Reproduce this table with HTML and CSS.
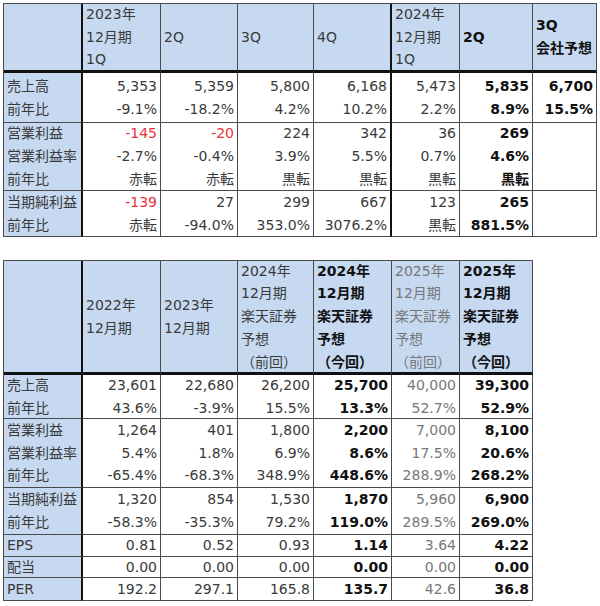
FILE: index.html
```html
<!DOCTYPE html>
<html lang="ja">
<head>
<meta charset="utf-8">
<title>業績推移</title>
<link rel="stylesheet" href="styles.css">
</head>
<body>
<div class="page">
  <div class="sheet sheet-q">
    <div class="c hd lab thick-r thick-b"></div>
    <div class="c hd thick-b"><div>2023年</div><div>12月期</div><div>1Q</div></div>
    <div class="c hd thick-b"><div>2Q</div></div>
    <div class="c hd thick-b"><div>3Q</div></div>
    <div class="c hd thick-b thick-r"><div>4Q</div></div>
    <div class="c hd thick-b"><div>2024年</div><div>12月期</div><div>1Q</div></div>
    <div class="c hd thick-b b"><div>2Q</div></div>
    <div class="c hd thick-b b"><div>3Q</div><div>会社予想</div></div>

    <div class="c lab thick-r"><div>売上高</div><div>前年比</div></div>
    <div class="c num"><div>5,353</div><div>-9.1%</div></div>
    <div class="c num"><div>5,359</div><div>-18.2%</div></div>
    <div class="c num"><div>5,800</div><div>4.2%</div></div>
    <div class="c num thick-r"><div>6,168</div><div>10.2%</div></div>
    <div class="c num"><div>5,473</div><div>2.2%</div></div>
    <div class="c num b"><div>5,835</div><div>8.9%</div></div>
    <div class="c num b"><div>6,700</div><div>15.5%</div></div>

    <div class="c lab thick-r"><div>営業利益</div><div>営業利益率</div><div>前年比</div></div>
    <div class="c num"><div class="neg">-145</div><div>-2.7%</div><div>赤転</div></div>
    <div class="c num"><div class="neg">-20</div><div>-0.4%</div><div>赤転</div></div>
    <div class="c num"><div>224</div><div>3.9%</div><div>黒転</div></div>
    <div class="c num thick-r"><div>342</div><div>5.5%</div><div>黒転</div></div>
    <div class="c num"><div>36</div><div>0.7%</div><div>黒転</div></div>
    <div class="c num b"><div>269</div><div>4.6%</div><div>黒転</div></div>
    <div class="c num b"></div>

    <div class="c lab thick-r"><div>当期純利益</div><div>前年比</div></div>
    <div class="c num"><div class="neg">-139</div><div>赤転</div></div>
    <div class="c num"><div>27</div><div>-94.0%</div></div>
    <div class="c num"><div>299</div><div>353.0%</div></div>
    <div class="c num thick-r"><div>667</div><div>3076.2%</div></div>
    <div class="c num"><div>123</div><div>黒転</div></div>
    <div class="c num b"><div>265</div><div>881.5%</div></div>
    <div class="c num b"></div>
  </div>

  <div class="sheet sheet-y">
    <div class="c hd lab thick-r thick-b"></div>
    <div class="c hd thick-b"><div>2022年</div><div>12月期</div></div>
    <div class="c hd thick-b"><div>2023年</div><div>12月期</div></div>
    <div class="c hd thick-b"><div>2024年</div><div>12月期</div><div>楽天証券</div><div>予想</div><div>（前回）</div></div>
    <div class="c hd thick-b b"><div>2024年</div><div>12月期</div><div>楽天証券</div><div>予想</div><div>（今回）</div></div>
    <div class="c hd thick-b light"><div>2025年</div><div>12月期</div><div>楽天証券</div><div>予想</div><div>（前回）</div></div>
    <div class="c hd thick-b b"><div>2025年</div><div>12月期</div><div>楽天証券</div><div>予想</div><div>（今回）</div></div>

    <div class="c lab thick-r"><div>売上高</div><div>前年比</div></div>
    <div class="c num"><div>23,601</div><div>43.6%</div></div>
    <div class="c num"><div>22,680</div><div>-3.9%</div></div>
    <div class="c num"><div>26,200</div><div>15.5%</div></div>
    <div class="c num b"><div>25,700</div><div>13.3%</div></div>
    <div class="c num light"><div>40,000</div><div>52.7%</div></div>
    <div class="c num b"><div>39,300</div><div>52.9%</div></div>

    <div class="c lab thick-r"><div>営業利益</div><div>営業利益率</div><div>前年比</div></div>
    <div class="c num"><div>1,264</div><div>5.4%</div><div>-65.4%</div></div>
    <div class="c num"><div>401</div><div>1.8%</div><div>-68.3%</div></div>
    <div class="c num"><div>1,800</div><div>6.9%</div><div>348.9%</div></div>
    <div class="c num b"><div>2,200</div><div>8.6%</div><div>448.6%</div></div>
    <div class="c num light"><div>7,000</div><div>17.5%</div><div>288.9%</div></div>
    <div class="c num b"><div>8,100</div><div>20.6%</div><div>268.2%</div></div>

    <div class="c lab thick-r"><div>当期純利益</div><div>前年比</div></div>
    <div class="c num"><div>1,320</div><div>-58.3%</div></div>
    <div class="c num"><div>854</div><div>-35.3%</div></div>
    <div class="c num"><div>1,530</div><div>79.2%</div></div>
    <div class="c num b"><div>1,870</div><div>119.0%</div></div>
    <div class="c num light"><div>5,960</div><div>289.5%</div></div>
    <div class="c num b"><div>6,900</div><div>269.0%</div></div>

    <div class="c lab thick-r"><div>EPS</div></div>
    <div class="c num"><div>0.81</div></div>
    <div class="c num"><div>0.52</div></div>
    <div class="c num"><div>0.93</div></div>
    <div class="c num b"><div>1.14</div></div>
    <div class="c num light"><div>3.64</div></div>
    <div class="c num b"><div>4.22</div></div>

    <div class="c lab thick-r"><div>配当</div></div>
    <div class="c num"><div>0.00</div></div>
    <div class="c num"><div>0.00</div></div>
    <div class="c num"><div>0.00</div></div>
    <div class="c num b"><div>0.00</div></div>
    <div class="c num light"><div>0.00</div></div>
    <div class="c num b"><div>0.00</div></div>

    <div class="c lab thick-r"><div>PER</div></div>
    <div class="c num"><div>192.2</div></div>
    <div class="c num"><div>297.1</div></div>
    <div class="c num"><div>165.8</div></div>
    <div class="c num b"><div>135.7</div></div>
    <div class="c num light"><div>42.6</div></div>
    <div class="c num b"><div>36.8</div></div>
  </div>
</div>
</body>
</html>
```

FILE: styles.css
```css
html, body {
  margin: 0;
  padding: 0;
  background: #ffffff;
}

body {
  font-family: "DejaVu Sans", "Noto Sans CJK JP", sans-serif;
  font-size: 14px;
  color: #3a3a3a;
}

.page {
  padding: 3px;
  display: flex;
  flex-direction: column;
  align-items: flex-start;
  gap: 23px;
}

.sheet {
  display: grid;
  border-top: 1px solid #4a4a4a;
  border-left: 1px solid #4a4a4a;
}

.sheet-q {
  grid-template-columns: 79px 78px 77px 76px 78px 68px 73px 64px;
  grid-template-rows: 69px 50px 68px 46px;
}

.sheet-y {
  grid-template-columns: 79px 78px 77px 76px 78px 68px 73px;
  grid-template-rows: 114px 44px 69px 47px 22px 21px 23px;
}

.c {
  box-sizing: border-box;
  border-right: 1px solid #4a4a4a;
  border-bottom: 1px solid #4a4a4a;
  display: flex;
  flex-direction: column;
  justify-content: center;
  line-height: 22.7px;
  white-space: nowrap;
  overflow: visible;
  min-height: 0;
}

.hd {
  background: #c6d9f1;
  align-items: flex-start;
  padding-left: 3px;
}

.lab {
  background: #c6d9f1;
  align-items: flex-start;
  padding-left: 3px;
}

.num {
  background: #ffffff;
  align-items: flex-end;
  padding-right: 3px;
}

.thick-r {
  border-right: 2px solid #111111;
}

.thick-b {
  border-bottom: 3px solid #111111;
}

.b {
  font-weight: bold;
  color: #111111;
}

.light {
  color: #777777;
}

.neg {
  color: #e8303a;
}
```
